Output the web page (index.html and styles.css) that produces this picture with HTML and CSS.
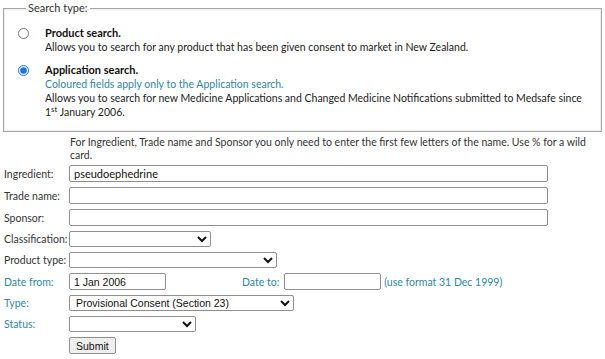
FILE: index.html
```html
<!DOCTYPE html>
<html>
<head>
	<title>Medsafe Product/Application Search</title>
	<link rel="stylesheet" href="styles.css">
</head>
<body>
<div class="page">

	<!--========== SEARCH TYPE ==========-->
	<fieldset class="search__type">
		<legend>Search type:</legend>

		<div class="type__option">
			<input type="radio" name="stype" class="type__radio">
			<div class="type__text">
				<b>Product search.</b><br>
				Allows you to search for any product that has been given consent to market in New Zealand.
			</div>
		</div>

		<div class="type__option">
			<input type="radio" name="stype" class="type__radio" checked>
			<div class="type__text">
				<b>Application search.</b><br>
				<span class="teal">Coloured fields apply only to the Application search.</span><br>
				Allows you to search for new Medicine Applications and Changed Medicine Notifications submitted to Medsafe since<br>
				1<sup>st</sup> January 2006.
			</div>
		</div>
	</fieldset>

	<!--========== SEARCH FORM ==========-->
	<form class="search__form" action="javascript:void(0);">
		<p class="form__intro">For Ingredient, Trade name and Sponsor you only need to enter the first few letters of the name. Use % for a wild card.</p>

		<div class="form__grid">
			<label>Ingredient:</label>
			<div><input type="text" class="text__input" value="pseudoephedrine"></div>

			<label>Trade name:</label>
			<div><input type="text" class="text__input"></div>

			<label>Sponsor:</label>
			<div><input type="text" class="text__input"></div>

			<label>Classification:</label>
			<div><select class="sel sel__class"><option></option></select></div>

			<label>Product type:</label>
			<div><select class="sel sel__ptype"><option></option></select></div>

			<label class="teal">Date from:</label>
			<div class="date__row">
				<input type="text" class="date__input" value="1 Jan 2006">
				<label class="teal date__to">Date to:</label>
				<input type="text" class="date__input">
				<span class="teal date__hint">(use format 31 Dec 1999)</span>
			</div>

			<label class="teal">Type:</label>
			<div><select class="sel sel__type"><option>Provisional Consent (Section 23)</option></select></div>

			<label class="teal">Status:</label>
			<div><select class="sel sel__status"><option></option></select></div>

			<span></span>
			<div><input type="submit" value="Submit" class="btn__submit"></div>
		</div>
	</form>

</div>
</body>
</html>
```

FILE: styles.css
```css
*{
	box-sizing: border-box;
}

body{
	margin: 0;
	background-color: #fff;
	color: #222;
	font-family: Lato, "Open Sans", sans-serif;
	font-size: 10.5px;
}

.page{
	padding: 0 3px;
}

.teal{
	color: #2f86a0;
}

/*========= SEARCH TYPE BOX =========*/
.search__type{
	margin: 1px 0 0 0;
	padding: 11px 6px 12px 14px;
	border: 1px solid #a6a6a6;
	box-shadow: inset 0 0 0 1px #eee;
}

.search__type legend{
	padding: 0 2px;
	margin-left: 8px;
	color: #333;
	line-height: 14px;
	font-size: 11px;
}

.type__option{
	display: flex;
	align-items: flex-start;
	margin-bottom: 9px;
}

.type__option:last-child{
	margin-bottom: 0;
}

.type__radio{
	margin: 2px 16px 0 0;
	width: 11px;
	height: 11px;
	accent-color: #1a73e8;
}

.type__text{
	line-height: 14px;
}

.type__text b{
	color: #111;
	font-size: 11px;
}

.type__text sup{
	font-size: 8px;
	line-height: 0;
	vertical-align: 4px;
}

/*========= FORM =========*/
.form__intro{
	margin: 4px 0 3px 67px;
	line-height: 13px;
	padding-right: 6px;
	color: #333;
}

.form__grid{
	display: grid;
	grid-template-columns: 66px 1fr;
	row-gap: 5px;
	align-items: center;
}

.form__grid label{
	padding-left: 1px;
	color: #333;
	white-space: nowrap;
}

.form__grid label.teal{
	color: #2f86a0;
}

.text__input{
	display: block;
	width: 479px;
	height: 17px;
	padding: 0 4px;
	border: 1px solid #8f8f8f;
	border-radius: 2px;
	font-family: Lato, "Open Sans", sans-serif;
	font-size: 11px;
	color: #111;
}

.sel{
	display: block;
	height: 16px;
	padding: 0 2px;
	border: 1px solid #8f8f8f;
	border-radius: 2px;
	background: #fff;
	font-family: "Liberation Sans", Arial, sans-serif;
	font-size: 10.5px;
	color: #111;
}

.sel__class{ width: 142px; }
.sel__ptype{ width: 208px; }
.sel__type{ width: 225px; }
.sel__status{ width: 127px; }

.date__row{
	display: flex;
	align-items: center;
}

.date__input{
	width: 97px;
	height: 17px;
	padding: 0 4px;
	border: 1px solid #8f8f8f;
	border-radius: 2px;
	font-family: "Liberation Sans", Arial, sans-serif;
	font-size: 10.5px;
	color: #111;
}

.form__grid .date__to{
	margin-left: 76px;
	margin-right: 5px;
	padding-left: 0;
}

.date__hint{
	margin-left: 3px;
}

.btn__submit{
	height: 17px;
	padding: 0 6px;
	border: 1px solid #8f8f8f;
	border-radius: 2px;
	background-color: #efefef;
	font-family: "Liberation Sans", Arial, sans-serif;
	font-size: 10.5px;
	color: #111;
}
```
